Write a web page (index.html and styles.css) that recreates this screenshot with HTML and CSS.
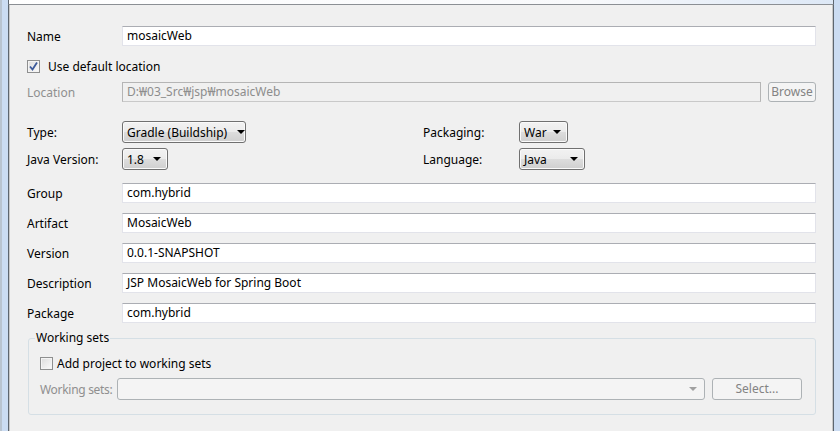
FILE: index.html
```html
<!DOCTYPE html>
<html>
<head>
<meta charset="utf-8">
<link rel="stylesheet" href="styles.css">
</head>
<body>
<div class="topstrip"></div>
<div class="frame">
  <div class="edge-l"></div>
  <div class="pane">
    <div class="row first">
      <span class="label">Name</span>
      <div class="input">mosaicWeb</div>
    </div>
    <div class="checkrow">
      <span class="check checked"><svg width="11" height="11" viewBox="0 0 11 11"><path d="M2 5.5 L4.5 8.5 L9 1.5" fill="none" stroke="#3c5a9a" stroke-width="1.8"/></svg></span>
      <span>Use default location</span>
    </div>
    <div class="row loc">
      <span class="label disabled">Location</span>
      <div class="input dis">D:₩03_Src₩jsp₩mosaicWeb</div>
      <div class="btn dis browse">Browse</div>
    </div>
    <div class="grid">
      <span class="label">Type:</span>
      <div class="cell"><div class="combo w-type"><span>Gradle (Buildship)</span><i class="arrow"></i></div></div>
      <span class="label">Packaging:</span>
      <div class="cell"><div class="combo w-war"><span>War</span><i class="arrow"></i></div></div>
      <span class="label">Java Version:</span>
      <div class="cell"><div class="combo w-java"><span>1.8</span><i class="arrow"></i></div></div>
      <span class="label">Language:</span>
      <div class="cell"><div class="combo w-lang"><span>Java</span><i class="arrow"></i></div></div>
    </div>
    <div class="row group">
      <span class="label">Group</span>
      <div class="input">com.hybrid</div>
    </div>
    <div class="row next">
      <span class="label">Artifact</span>
      <div class="input">MosaicWeb</div>
    </div>
    <div class="row next">
      <span class="label">Version</span>
      <div class="input">0.0.1-SNAPSHOT</div>
    </div>
    <div class="row next">
      <span class="label">Description</span>
      <div class="input">JSP MosaicWeb for Spring Boot</div>
    </div>
    <div class="row next">
      <span class="label">Package</span>
      <div class="input">com.hybrid</div>
    </div>
    <fieldset class="wsets">
      <legend>Working sets</legend>
      <div class="checkrow inner">
        <span class="check"></span>
        <span>Add project to working sets</span>
      </div>
      <div class="wsrow">
        <span class="wslabel disabled">Working sets:</span>
        <div class="combo dis wscombo"><span></span><i class="arrow grey"></i></div>
        <div class="btn dis select">Select...</div>
      </div>
    </fieldset>
  </div>
  <div class="edge-r"></div>
</div>
</body>
</html>
```

FILE: styles.css
```css
html, body {
  margin: 0;
  padding: 0;
  width: 840px;
  height: 431px;
  overflow: hidden;
  background: #f0f0f0;
  font-family: "Noto Sans", "Noto Sans CJK KR", sans-serif;
  font-size: 12px;
  color: #000;
}
.topstrip {
  height: 4px;
  margin-left: 8px;
  margin-right: 6px;
  background: linear-gradient(to right, #ffffff 0%, #f8f9fb 70%, #dde8f6 100%);
  border-left: 1px solid #5d6670;
  border-right: 1px solid #5d6670;
}
.frame {
  display: flex;
  height: 427px;
}
.edge-l {
  width: 8px;
  background: #cbdcf2;
  box-shadow: inset 2px 0 0 #b9c4d0;
  margin-top: -4px;
}
.edge-r {
  width: 6px;
  background: #cbdcf2;
  margin-top: -4px;
}
.pane {
  flex: 1;
  border-left: 1px solid #5d6670;
  border-right: 1px solid #5d6670;
  border-top: 1px solid #8b8f94;
  box-shadow: inset 1px 0 0 #c8c8c8, inset -1px 0 0 #c8c8c8;
  padding: 0 17px 0 18px;
  background: #f0f0f0;
}
.row {
  display: flex;
  align-items: center;
  height: 20px;
}
.row.first { margin-top: 21px; }
.row.loc { margin-top: 6px; }
.row.group { margin-top: 13px; }
.row.next { margin-top: 10px; }
.label {
  width: 95px;
  flex: none;
  white-space: nowrap;
}
.disabled { color: #8f8f8f; }
.input {
  flex: 1;
  height: 20px;
  box-sizing: border-box;
  background: #fff;
  border: 1px solid #e2e3ea;
  border-top-color: #abadb3;
  padding: 0 4px;
  line-height: 18px;
  white-space: nowrap;
}
.input.dis {
  background: #f0f0f0;
  border: 1px solid #b5b5b5;
  border-bottom-color: #c9c9c9;
  color: #8d8d8d;
}
.btn {
  box-sizing: border-box;
  height: 21px;
  border: 1px solid #adb2b5;
  border-radius: 3px;
  background: #f4f4f4;
  text-align: center;
  line-height: 19px;
  color: #838383;
}
.browse {
  width: 48px;
  margin-left: 7px;
  height: 20px;
  line-height: 18px;
}
.checkrow {
  display: flex;
  align-items: center;
  height: 20px;
  margin-top: 10px;
}
.check {
  width: 13px;
  height: 13px;
  box-sizing: border-box;
  border: 1px solid #8e8f8f;
  background: linear-gradient(135deg, #dcdcdc, #fbfbfb);
  box-shadow: inset 0 0 0 1px #f4f4f4;
  margin-right: 8px;
  display: flex;
  align-items: center;
  justify-content: center;
}
.grid {
  display: grid;
  grid-template-columns: 95px 301px 96px 1fr;
  grid-template-rows: 22px 22px;
  row-gap: 5px;
  margin-top: 19px;
  align-items: center;
}
.cell { display: flex; }
.combo {
  box-sizing: border-box;
  height: 22px;
  border: 1px solid #707070;
  border-radius: 3px;
  background: linear-gradient(#f2f2f2 0%, #ebebeb 50%, #dddddd 51%, #cfcfcf 100%);
  display: flex;
  align-items: center;
  padding: 0 6px 0 4px;
  box-shadow: inset 0 0 0 1px #fafafa;
}
.combo span { flex: 1; white-space: nowrap; }
.arrow {
  width: 0;
  height: 0;
  border-left: 4px solid transparent;
  border-right: 4px solid transparent;
  border-top: 4px solid #000;
}
.arrow.grey { border-top-color: #a0a0a0; }
.w-type { width: 124px; }
.w-type span { padding-right: 10px; }
.w-java { width: 46px; }
.w-war { width: 49px; }
.w-lang { width: 66px; }
.wsets {
  margin: 8px 0 0 1px;
  padding: 0 13px 0 11px;
  border: 1px solid #d5dfe5;
  border-radius: 3px;
  height: 84px;
  box-sizing: border-box;
}
.wsets legend {
  padding: 0 1px;
  margin-left: -5px;
  line-height: 14px;
}
.checkrow.inner { margin-top: 8px; }
.checkrow.inner .check { margin-right: 4px; }
.wsrow {
  display: flex;
  align-items: center;
  margin-top: 5px;
}
.wslabel { width: 77px; flex: none; white-space: nowrap; letter-spacing: -0.3px; }
.wscombo {
  flex: 1;
  background: #f4f4f4;
  border-color: #adb2b5;
  box-shadow: none;
  padding-right: 7px;
}
.select {
  width: 90px;
  height: 22px;
  line-height: 20px;
  margin-left: 7px;
}
```
